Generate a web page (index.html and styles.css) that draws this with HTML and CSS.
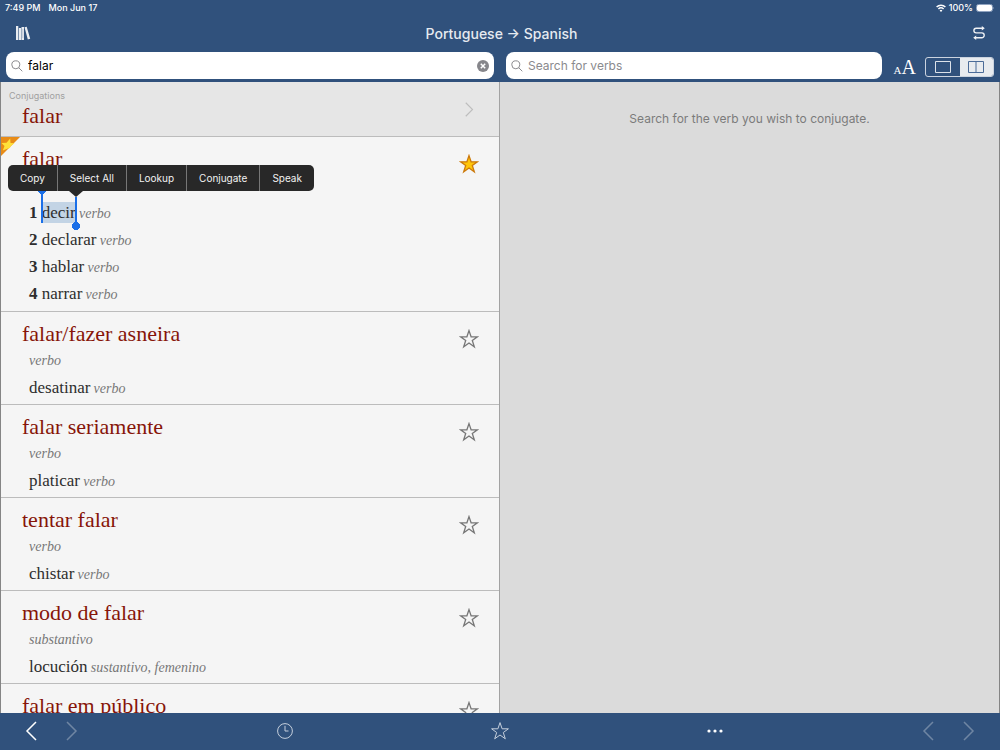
FILE: index.html
```html
<!DOCTYPE html>
<html lang="en">
<head>
<meta charset="utf-8">
<meta name="viewport" content="width=device-width, initial-scale=1">
<title>Portuguese → Spanish</title>
<link rel="stylesheet" href="styles.css">
</head>
<body>
<svg class="defs" aria-hidden="true">
  <symbol id="star" viewBox="0 0 20 20"><path d="M10 1.6 12.1 7.8H18.4L13.3 11.5 15.3 17.8 10 14 4.700 17.800 6.700 11.500 1.600 7.800H7.900Z"/></symbol>
  <symbol id="left" viewBox="0 0 12 20"><path d="M11 1 2 10 11 19"/></symbol>
  <symbol id="right" viewBox="0 0 12 20"><path d="M1 1 10 10 1 19"/></symbol>
  <symbol id="glass" viewBox="0 0 12 12"><circle cx="4.800" cy="4.800" r="4"/><path d="M7.700 7.700 11.300 11.300"/></symbol>
</svg>
<div class="app">
  <header class="top">
    <div class="status">
      <span>7:49 PM</span><span>Mon Jun 17</span>
      <span class="power">
        <svg width="10" height="8" viewBox="0 0 10 8" fill="none" stroke="#fff" stroke-width="1.500"><path d="M.6 3A6.300 6.300 0 0 1 9.400 3M2.400 5A3.800 3.800 0 0 1 7.600 5"/><path d="M5 8 3.600 6.500A2 2 0 0 1 6.400 6.500Z" fill="#fff" stroke="none"/></svg>
        <span>100%</span>
        <svg width="19" height="8" viewBox="0 0 19 8"><rect x=".5" y=".5" width="16" height="7" rx="2" fill="none" stroke="#8fa3c0"/><rect x="1" y="1" width="15" height="6" rx="1.400" fill="#fff"/><path d="M17.500 2.700Q18.700 4 17.500 5.300Z" fill="#b4c1d3"/></svg>
      </span>
    </div>
    <div class="titlebar">
      <button class="plain" aria-label="Dictionaries"><svg width="16" height="14" viewBox="0 0 16 14" fill="#e8ecf1"><path d="M1 0H3.300V14H1ZM3.900 2H6.100V14H3.900ZM6.500 1H9V14H6.500ZM9.500 1.300 11.700.7 15.200 12.800 12.800 13.500Z"/><path d="M7.800 3V12" stroke="#9cabc1" stroke-width=".5"/></svg></button>
      <h1>Portuguese → Spanish</h1>
      <button class="plain" aria-label="Swap languages"><svg width="14" height="14" viewBox="0 0 14 14" fill="none" stroke="#f0f2f5" stroke-width="1.400"><path d="M11 2.300H4.200A2.300 2.300 0 0 0 4.200 6.900H9.800A2.400 2.400 0 0 1 9.800 11.700H3"/><path d="M9.800 0 12.800 2.300 9.800 4.600ZM4.200 9.400 1.200 11.700 4.200 14Z" fill="#f0f2f5" stroke="none"/></svg></button>
    </div>
    <div class="searches">
      <form class="search"><svg class="lens" width="12" height="12"><use href="#glass"/></svg><input type="text" aria-label="Search dictionary" value="falar"><button type="reset" class="plain" aria-label="Clear"><svg width="12" height="12" viewBox="0 0 12 12"><circle cx="6" cy="6" r="6" fill="#86868b"/><path d="M3.800 3.800 8.200 8.200M8.200 3.800 3.800 8.200" stroke="#fff" stroke-width="1.500"/></svg></button></form>
      <div class="verbs">
        <form class="search"><svg class="lens" width="12" height="12"><use href="#glass"/></svg><input type="text" aria-label="Search for verbs" placeholder="Search for verbs"></form>
        <button class="plain sizes" aria-label="Text size"><small>A</small>A</button>
        <div class="segments">
          <button aria-label="Single pane"><svg width="16" height="12" viewBox="0 0 16 12"><path d="M.5.5H15.500V11.500H.5Z" fill="none" stroke="currentColor"/></svg></button><button class="on" aria-label="Two panes"><svg width="16" height="12" viewBox="0 0 16 12"><path d="M.5.5H15.500V11.500H.5ZM8 .5V11.500" fill="none" stroke="currentColor"/></svg></button>
        </div>
      </div>
    </div>
  </header>
  <main class="panes">
    <section class="list">
      <a class="conjugations" href="#falar"><span><small>Conjugations</small><strong>falar</strong></span><svg class="chevron" width="9" height="15"><use href="#right" stroke="#bdbdbd" fill="none" stroke-width="1.500"/></svg></a>
      <article class="entry first" id="falar">
        <svg class="corner" width="19" height="19" viewBox="0 0 19 19"><path d="M0 0H19L0 19Z" fill="#e88b17"/><path d="M9.200 1.500 9.500 6 13.500 6.300 9.500 9.200 9 11 7 11.500 1.800 13.500 3.500 9 .5 6 5.500 5.700Z" fill="#ffe13a"/></svg>
        <h2>falar</h2>
        <button class="plain fav saved" aria-label="Remove favourite"><svg width="20" height="20"><use href="#star"/></svg></button>
        <ol>
          <li><b>1</b> <mark>decir</mark> <i>verbo</i></li>
          <li><b>2</b> declarar <i>verbo</i></li>
          <li><b>3</b> hablar <i>verbo</i></li>
          <li><b>4</b> narrar <i>verbo</i></li>
        </ol>
        <div class="menu"><button>Copy</button><button>Select All</button><button>Lookup</button><button>Conjugate</button><button>Speak</button></div>
      </article>
      <article class="entry"><h2>falar/fazer asneira</h2><p class="pos">verbo</p><p>desatinar <i>verbo</i></p><button class="plain fav" aria-label="Favourite"><svg width="20" height="20"><use href="#star"/></svg></button></article>
      <article class="entry"><h2>falar seriamente</h2><p class="pos">verbo</p><p>platicar <i>verbo</i></p><button class="plain fav" aria-label="Favourite"><svg width="20" height="20"><use href="#star"/></svg></button></article>
      <article class="entry"><h2>tentar falar</h2><p class="pos">verbo</p><p>chistar <i>verbo</i></p><button class="plain fav" aria-label="Favourite"><svg width="20" height="20"><use href="#star"/></svg></button></article>
      <article class="entry"><h2>modo de falar</h2><p class="pos">substantivo</p><p>locución <i>sustantivo, femenino</i></p><button class="plain fav" aria-label="Favourite"><svg width="20" height="20"><use href="#star"/></svg></button></article>
      <article class="entry"><h2>falar em público</h2><button class="plain fav" aria-label="Favourite"><svg width="20" height="20"><use href="#star"/></svg></button></article>
    </section>
    <section class="detail"><p>Search for the verb you wish to conjugate.</p></section>
  </main>
  <nav class="bottom">
    <div class="pair"><button class="plain" aria-label="Back"><svg width="12" height="20"><use href="#left"/></svg></button><button class="plain" disabled aria-label="Forward"><svg width="12" height="20"><use href="#right"/></svg></button></div>
    <button class="plain thin" aria-label="History"><svg width="16" height="16" viewBox="0 0 16 16"><circle cx="8" cy="8" r="7.400"/><path d="M8 2.800V8H11.500"/></svg></button>
    <button class="plain thin" aria-label="Favourites"><svg width="20" height="20"><use href="#star"/></svg></button>
    <button class="plain" aria-label="More"><svg width="16" height="4" viewBox="0 0 16 4"><g fill="#fff" stroke="none"><circle cx="2" cy="2" r="1.600"/><circle cx="8" cy="2" r="1.600"/><circle cx="14" cy="2" r="1.600"/></g></svg></button>
    <div class="pair end"><button class="plain" disabled aria-label="Previous verb"><svg width="12" height="20"><use href="#left"/></svg></button><button class="plain" disabled aria-label="Next verb"><svg width="12" height="20"><use href="#right"/></svg></button></div>
  </nav>
</div>
</body>
</html>
```
FILE: styles.css
```css
* { box-sizing: border-box; }
body { margin: 0; font-family: Inter, "Liberation Sans", sans-serif; background: #30517c; }
h1, h2, p, ol { margin: 0; padding: 0; font-weight: 400; }
button, input { font: inherit; }
a { color: inherit; text-decoration: none; }
svg { display: block; flex: none; }
.defs { position: absolute; width: 0; height: 0; }
.plain { background: none; border: 0; padding: 0; color: #fff; display: flex; align-items: center; }
.app { height: 100vh; display: flex; flex-direction: column; overflow: hidden; }

.top { color: #fff; }
.status { display: flex; gap: 8px; padding: 0 5px; font-size: 9px; line-height: 15px; font-weight: 500; }
.power { margin-left: auto; display: flex; align-items: center; gap: 3px; }
.titlebar { display: flex; justify-content: space-between; align-items: center; padding: 0 14px 1px 15px; height: 37px; }
h1 { font-size: 14px; font-weight: 500; color: #e6eaf0; }
.searches { display: grid; grid-template-columns: 1fr 1fr; padding-bottom: 3px; }
.search { display: flex; align-items: center; gap: 5px; flex: 1; height: 27px; margin: 0 6px; padding: 0 5px; background: #fff; border-radius: 8px; }
.search input { flex: 1; min-width: 0; border: 0; padding: 0 0 1px; outline: 0; background: none; font-size: 12px; color: #000; }
.search input::placeholder { color: #8a8a8e; opacity: 1; }
.lens { fill: none; stroke: #8a8a8e; }
.verbs { display: flex; align-items: center; }
.sizes { font: 20px "Liberation Serif", serif; align-items: baseline; margin: 4px 9px 0 6px; }
.sizes small { font-size: 11px; }
.segments { display: flex; width: 69px; height: 20px; margin: 3px 6px 0 0; border: 1px solid #cbd3df; border-radius: 3px; overflow: hidden; }
.segments button { flex: 1; display: flex; align-items: center; justify-content: center; padding: 0; border: 0; background: none; color: #dce2ea; }
.segments .on { background: #e8ebef; color: #4b6b98; }

.panes { flex: 1; min-height: 0; display: grid; grid-template-columns: 1fr 1fr; border: solid #858585; border-width: 0 1px; }
.list { min-width: 0; overflow: hidden; background: #f5f5f5; border-right: 1px solid #a2a2a2; font: 17px "Liberation Serif", serif; color: #2e2e2e; }
.detail { background: #dbdbdb; padding-top: 29px; text-align: center; font-size: 12px; line-height: 16px; color: #7b7b7b; }
.conjugations { display: flex; align-items: center; justify-content: space-between; height: 55px; padding: 0 25px 0 8px; background: #e6e6e6; border-bottom: 1px solid #bcbcbc; }
.conjugations small { display: block; font: 9px/12px Inter, sans-serif; color: #a0a0a0; }
.conjugations strong { display: block; padding-left: 13px; font-size: 22px; line-height: 27px; font-weight: 400; color: #871509; }
.entry { position: relative; height: 93px; padding: 8px 60px 0 28px; border-bottom: 1px solid #bcbcbc; line-height: 27px; }
.entry h2 { margin-left: -7px; font-size: 22px; line-height: 27px; color: #871509; }
.entry i, .pos { font-size: 14px; font-style: italic; color: #777; }
.entry i { margin-left: -1px; }
.entry ol { list-style: none; padding-top: 27px; line-height: 27px; }
.entry li { height: 27px; }
.first { height: 175px; }
.fav { position: absolute; top: 17px; right: 20px; fill: none; stroke: #777; stroke-width: 1.3px; }
.saved { fill: #ffc60a; stroke: #cc7a0c; }
.corner { position: absolute; left: 0; top: 0; }
mark { position: relative; display: inline-block; height: 21px; line-height: 21px; color: inherit; background: #c3d4e5; }
mark::before, mark::after { content: ""; position: absolute; width: 8px; height: 33px; }
mark::before { left: -4px; bottom: 0; background: radial-gradient(circle at 50% 0, #1a6fe8 4px, transparent 4px), linear-gradient(#1a6fe8, #1a6fe8) 3px 0 / 2px 100% no-repeat; }
mark::after { right: -4px; bottom: -7px; background: radial-gradient(circle at 50% 29px, #1a6fe8 4px, transparent 4px), linear-gradient(#1a6fe8, #1a6fe8) 3px 0 / 2px 100% no-repeat; }
.menu { position: absolute; left: 7px; top: 28px; display: flex; height: 26px; font: 10px/26px Inter, sans-serif; background: #282828; border-radius: 5px; white-space: nowrap; }
.menu button { border: 0; border-right: 1px solid #777; padding: 0 12px; background: none; color: #f2f2f2; }
.menu button:last-of-type { border-right: 0; }
.menu::after { content: ""; position: absolute; left: 61px; top: 26px; border: 7px solid transparent; border-top: 6px solid #282828; border-bottom: 0; }

.bottom { height: 37px; flex: none; padding-bottom: 2px; display: grid; grid-template-columns: 178px 1fr 1fr 1fr 178px; align-items: center; justify-items: center; fill: none; stroke: #fff; stroke-width: 1.5px; }
.pair { justify-self: start; display: flex; gap: 29px; padding-left: 25px; }
.end { justify-self: end; padding: 0 25px 0 0; }
.bottom :disabled { opacity: .3; }
.thin { stroke: #c5cfdc; stroke-width: 1px; }
```
